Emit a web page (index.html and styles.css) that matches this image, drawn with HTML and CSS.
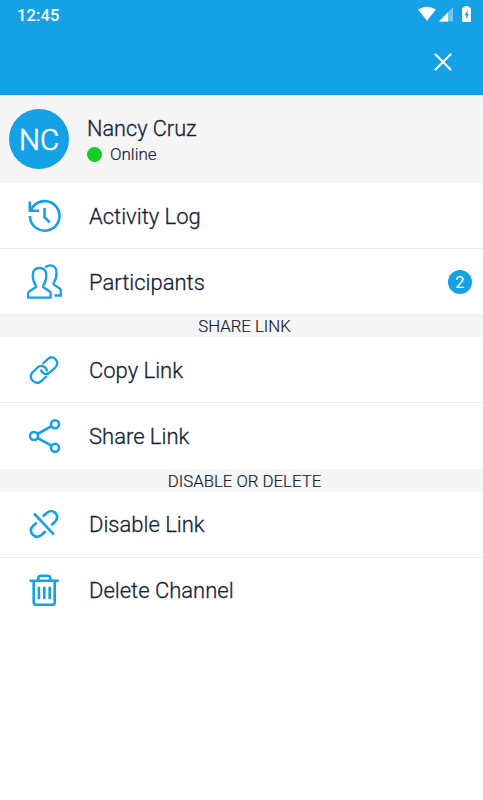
FILE: index.html
```html
<!DOCTYPE html>
<html lang="en">
<head>
<meta charset="utf-8">
<meta name="viewport" content="width=device-width">
<title>Channel menu</title>
<link rel="stylesheet" href="styles.css">
</head>
<body>
<header class="header">
  <div class="status">
    <span class="time">12:45</span>
    <svg class="status-icons" width="56" height="18" viewBox="417 5 56 18">
      <path d="M418 9.500Q427 3.800 436 9.500L427 20.800Z" fill="#fff"/>
      <path d="M439 21.500L453 7V21.500Z" fill="#73c8f0"/>
      <path d="M439 21.500L448 12.300V21.500Z" fill="#fff"/>
      <path d="M464.500 7.500V6h4v1.500h1.500q1 0 1 1V21q0 1-1 1h-7q-1 0-1-1V8.500q0-1 1-1z" fill="#fff"/>
      <path d="M467.800 10L464.500 15.300h1.800l-.6 4 3.300-5.300h-1.700z" fill="#14a1e5"/>
    </svg>
  </div>
  <div class="toolbar">
    <button class="close" aria-label="Close"><svg width="20" height="20" viewBox="0 0 20 20"><path d="M2.500 2.500L17.500 17.500M17.500 2.500L2.500 17.500"/></svg></button>
  </div>
</header>
<section class="profile">
  <div class="avatar">NC</div>
  <div class="person">
    <div class="name">Nancy Cruz</div>
    <div class="presence"><i class="dot"></i><span>Online</span></div>
  </div>
</section>
<main>
  <div class="row line">
    <svg class="icon" viewBox="11 8 36 36"><path d="M14.900 26A14.800 14.800 0 1 0 17.300 17.800L15.200 20.500M14.800 11.500V20.700H24M29.500 18V27.300L34.700 32.400"/></svg>
    <span class="label">Activity Log</span>
  </div>
  <div class="row">
    <svg class="icon" viewBox="11 9 36 36"><path class="thin" d="M13.200 42.700V38.300Q13.200 37 14.400 36.300L20.300 32.500Q21.600 31.700 20.600 30C18.300 27 17.800 24.500 17.800 20.500Q17.800 13 24.500 13Q31.300 13 31.300 20.500C31.300 24.500 30.800 27 28.500 30Q27.500 31.700 28.800 32.500L34.400 36.300Q35.600 37 35.600 38.300V42.700ZM30.300 12.500Q32 10.300 35 10.300Q41.500 10.300 41.500 17.700C41.500 21.500 41 24.500 38.800 27.500Q37.900 29 39.200 29.900L44.700 33.500Q45.800 34.300 45.800 35.600V40.500H39.500"/></svg>
    <span class="label">Participants</span><span class="badge">2</span>
  </div>
  <h2 class="section">SHARE LINK</h2>
  <div class="row line">
    <svg class="icon" viewBox="11 12 36 36"><path class="thin" d="M27.500 24L32.500 19.300C35.500 16.300 38.500 17 40.300 19C43 22 42.800 25 40 27.800L34 33C31 35.300 26.500 33.200 25.800 29.500M31.700 36L26.500 41C23.500 43.500 20 43.300 17.500 40.500C15 37.700 15.200 34.700 18 31.700L23 27.200C26 24.500 31.200 26.200 32.200 31.500"/></svg>
    <span class="label">Copy Link</span>
  </div>
  <div class="row">
    <svg class="icon" viewBox="11 12 36 36"><path d="M22.500 28L36.500 20.200M22.500 32L36.500 39.700"/><circle cx="19" cy="30" r="4"/><circle cx="40" cy="18.200" r="4"/><circle cx="40" cy="41.800" r="4"/></svg>
    <span class="label">Share Link</span>
  </div>
  <h2 class="section">DISABLE OR DELETE</h2>
  <div class="row line">
    <svg class="icon" viewBox="11 12 36 36"><path d="M19 19.500L39 40.700M27.700 22.500L32 18.700C35 16.300 38.500 17 40.500 19.200C43 22 42.700 25 40 27.800L36.300 31.300M21.700 28.800L18 32C15 35 15.300 38 17.700 40.600C20.300 43.300 23.500 43.400 26.500 41L30.700 37.300"/></svg>
    <span class="label">Disable Link</span>
  </div>
  <div class="row">
    <svg class="icon" viewBox="11 12 36 36"><path d="M14.500 20.800H43.700M23.300 20V18Q23.300 15.700 26 15.700H32.500Q35.200 15.700 35.200 18V20M18.700 21V42.200Q18.700 44.800 21.400 44.800H37Q39.700 44.800 39.700 42.200V21M23.900 26.700V39.300M29.300 26.700V39.300M34.700 26.700V39.300"/></svg>
    <span class="label">Delete Channel</span>
  </div>
</main>
</body>
</html>
```
FILE: styles.css
```css
* { box-sizing: border-box; }
body { margin: 0; min-height: 800px; background: #fff; color: #14233a; font-family: Roboto, sans-serif; }
.header { height: 95px; background: #14a1e5; border-bottom: 1px solid #0798df; color: #fff; }
.status { display: flex; justify-content: space-between; height: 30px; padding: 5px 10px 0 17px; }
.time { font-size: 16.500px; font-weight: 500; line-height: 21px; letter-spacing: .1px; }
.toolbar { display: flex; justify-content: flex-end; padding: 22px 30.500px 0 0; }
.close { width: 20px; height: 20px; padding: 0; border: 0; background: none; }
.close svg { display: block; stroke: #fff; stroke-width: 2.200; stroke-linecap: round; }
.profile { display: flex; height: 88px; padding: 14px 9px; background: #f5f5f5; }
.avatar { width: 60px; height: 60px; border-radius: 50%; background: #14a1e5; color: #fff; font-size: 29.500px; font-weight: 300; line-height: 63px; text-align: center; -webkit-text-stroke: .6px; }
.person { margin-left: 18px; padding-top: 6px; }
.name { font-size: 21.700px; font-weight: 300; line-height: 28px; -webkit-text-stroke: .3px; }
.presence { display: flex; align-items: center; gap: 8px; height: 22px; font-size: 17px; font-weight: 300; line-height: 20px; -webkit-text-stroke: .2px; }
.dot { width: 15px; height: 15px; border-radius: 50%; background: #18cc27; }
.row { display: flex; align-items: center; height: 65.300px; padding: 0 11px 0 26px; }
.line { height: 66px; border-bottom: 1px solid #ebebeb; }
.icon { flex: none; width: 36px; height: 36px; fill: none; stroke: #14a1e5; stroke-width: 2.600; }
.thin { stroke-width: 2.300; }
.label { margin-left: 27px; padding-top: 2px; font-size: 22px; font-weight: 300; line-height: 28px; -webkit-text-stroke: .3px; }
.badge { width: 24px; height: 24px; margin-left: auto; border-radius: 50%; background: #14a1e5; color: #fff; font-size: 16.500px; line-height: 25px; text-align: center; }
.section { height: 23px; margin: 0; padding-left: 6px; background: #f5f5f5; font-size: 16.800px; font-weight: 300; line-height: 24px; text-align: center; -webkit-text-stroke: .2px; }
```
